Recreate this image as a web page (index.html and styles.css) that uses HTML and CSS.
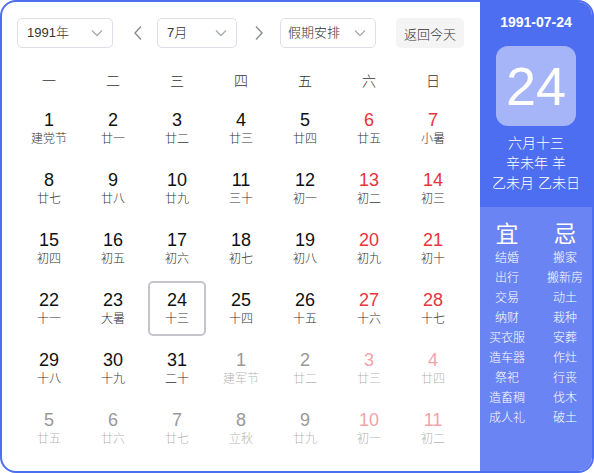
FILE: index.html
```html
<!DOCTYPE html>
<html lang="zh">
<head>
<meta charset="utf-8">
<link rel="stylesheet" href="styles.css">
</head>
<body>
<div class="cal">
  <div class="main">
    <div class="toolbar">
      <div class="select sel-year"><span>1991年</span><svg class="chev" viewBox="0 0 12 8" width="12" height="8"><path d="M1 1.5 L6 6.5 L11 1.5" fill="none" stroke="#a8abb2" stroke-width="1.3"/></svg></div>
      <div class="arrow arrow-prev"><svg viewBox="0 0 10 16" width="10" height="16"><path d="M8 1.5 L2 8 L8 14.5" fill="none" stroke="#8a8d93" stroke-width="1.4"/></svg></div>
      <div class="select sel-month"><span>7月</span><svg class="chev" viewBox="0 0 12 8" width="12" height="8"><path d="M1 1.5 L6 6.5 L11 1.5" fill="none" stroke="#a8abb2" stroke-width="1.3"/></svg></div>
      <div class="arrow arrow-next"><svg viewBox="0 0 10 16" width="10" height="16"><path d="M2 1.5 L8 8 L2 14.5" fill="none" stroke="#8a8d93" stroke-width="1.4"/></svg></div>
      <div class="select sel-hol"><span>假期安排</span><svg class="chev" viewBox="0 0 12 8" width="12" height="8"><path d="M1 1.5 L6 6.5 L11 1.5" fill="none" stroke="#a8abb2" stroke-width="1.3"/></svg></div>
      <div class="today-btn">返回今天</div>
    </div>
    <div class="weekdays">
      <div>一</div><div>二</div><div>三</div><div>四</div><div>五</div><div>六</div><div>日</div>
    </div>
    <div class="grid">
      <div class="cell"><b>1</b><i>建党节</i></div>
      <div class="cell"><b>2</b><i>廿一</i></div>
      <div class="cell"><b>3</b><i>廿二</i></div>
      <div class="cell"><b>4</b><i>廿三</i></div>
      <div class="cell"><b>5</b><i>廿四</i></div>
      <div class="cell we"><b>6</b><i>廿五</i></div>
      <div class="cell we"><b>7</b><i>小暑</i></div>

      <div class="cell"><b>8</b><i>廿七</i></div>
      <div class="cell"><b>9</b><i>廿八</i></div>
      <div class="cell"><b>10</b><i>廿九</i></div>
      <div class="cell"><b>11</b><i>三十</i></div>
      <div class="cell"><b>12</b><i>初一</i></div>
      <div class="cell we"><b>13</b><i>初二</i></div>
      <div class="cell we"><b>14</b><i>初三</i></div>

      <div class="cell"><b>15</b><i>初四</i></div>
      <div class="cell"><b>16</b><i>初五</i></div>
      <div class="cell"><b>17</b><i>初六</i></div>
      <div class="cell"><b>18</b><i>初七</i></div>
      <div class="cell"><b>19</b><i>初八</i></div>
      <div class="cell we"><b>20</b><i>初九</i></div>
      <div class="cell we"><b>21</b><i>初十</i></div>

      <div class="cell"><b>22</b><i>十一</i></div>
      <div class="cell"><b>23</b><i>大暑</i></div>
      <div class="cell sel"><b>24</b><i>十三</i></div>
      <div class="cell"><b>25</b><i>十四</i></div>
      <div class="cell"><b>26</b><i>十五</i></div>
      <div class="cell we"><b>27</b><i>十六</i></div>
      <div class="cell we"><b>28</b><i>十七</i></div>

      <div class="cell"><b>29</b><i>十八</i></div>
      <div class="cell"><b>30</b><i>十九</i></div>
      <div class="cell"><b>31</b><i>二十</i></div>
      <div class="cell other"><b>1</b><i>建军节</i></div>
      <div class="cell other"><b>2</b><i>廿二</i></div>
      <div class="cell other we"><b>3</b><i>廿三</i></div>
      <div class="cell other we"><b>4</b><i>廿四</i></div>

      <div class="cell other"><b>5</b><i>廿五</i></div>
      <div class="cell other"><b>6</b><i>廿六</i></div>
      <div class="cell other"><b>7</b><i>廿七</i></div>
      <div class="cell other"><b>8</b><i>立秋</i></div>
      <div class="cell other"><b>9</b><i>廿九</i></div>
      <div class="cell other we"><b>10</b><i>初一</i></div>
      <div class="cell other we"><b>11</b><i>初二</i></div>
    </div>
  </div>
  <div class="side">
    <div class="side-top">
      <div class="date">1991-07-24</div>
      <div class="bigday">24</div>
      <div class="lunar">
        <div>六月十三</div>
        <div>辛未年 羊</div>
        <div>乙未月 乙未日</div>
      </div>
    </div>
    <div class="side-bottom">
      <div class="col">
        <div class="head">宜</div>
        <div>结婚</div><div>出行</div><div>交易</div><div>纳财</div><div>买衣服</div><div>造车器</div><div>祭祀</div><div>造畜稠</div><div>成人礼</div>
      </div>
      <div class="col">
        <div class="head">忌</div>
        <div>搬家</div><div>搬新房</div><div>动土</div><div>栽种</div><div>安葬</div><div>作灶</div><div>行丧</div><div>伐木</div><div>破土</div>
      </div>
    </div>
  </div>
</div>
</body>
</html>
```

FILE: styles.css
```css
html, body {
  margin: 0;
  padding: 0;
  background: #fff;
}
body {
  font-family: "Liberation Sans", "Noto Sans CJK SC", sans-serif;
  font-weight: 300;
}
.cal {
  width: 594px;
  height: 473px;
  box-sizing: border-box;
  border: 2px solid #4e6ef2;
  border-radius: 16px;
  display: flex;
  overflow: hidden;
  background: #fff;
}
.main {
  width: 478px;
  box-sizing: border-box;
  padding: 16px 0 0 15px;
}
.toolbar {
  display: flex;
  align-items: center;
  height: 30px;
}
.select {
  box-sizing: border-box;
  height: 30px;
  border: 1px solid #dcdfe6;
  border-radius: 5px;
  display: flex;
  align-items: center;
  justify-content: space-between;
  padding: 0 9px;
  font-size: 13px;
  color: #333;
}
.select span { line-height: 28px; }
.sel-year { width: 96px; }
.sel-month { width: 80px; }
.sel-hol { width: 96px; padding-left: 7px; }
.arrow {
  display: flex;
  justify-content: center;
  align-items: center;
  height: 30px;
}
.arrow-prev { width: 38px; padding-left: 6px; }
.arrow-next { width: 43px; }
.today-btn {
  margin-left: 20px;
  width: 68px;
  height: 30px;
  box-sizing: border-box;
  background: #f4f4f5;
  border-radius: 5px;
  font-size: 13px;
  color: #333;
  display: flex;
  align-items: center;
  justify-content: center;
}
.weekdays {
  display: grid;
  grid-template-columns: repeat(7, 64px);
  margin-top: 14px;
  height: 36px;
  align-items: center;
  font-size: 14px;
  color: #333;
  text-align: center;
}
.grid {
  display: grid;
  grid-template-columns: repeat(7, 64px);
  grid-auto-rows: 55px;
  row-gap: 5px;
  margin-top: 3px;
}
.cell {
  margin: 0 3px;
  box-sizing: border-box;
  text-align: center;
  border: 2px solid transparent;
  border-radius: 5px;
  padding-top: 6px;
}
.cell b {
  display: block;
  font-weight: normal;
  font-size: 18px;
  line-height: 22px;
  color: #111;
}
.cell i {
  display: block;
  font-style: normal;
  font-size: 12px;
  line-height: 16px;
  color: #333;
}
.cell.we b { color: #e8333b; }
.cell.sel { border-color: #c4c6cc; }
.cell.other b { color: #999; }
.cell.other i { color: #b5b5b5; }
.cell.other.we b { color: #f2a3a8; }
.side {
  width: 112px;
  display: flex;
  flex-direction: column;
  color: #fff;
}
.side-top {
  background: #4e6ef2;
  height: 205px;
  display: flex;
  flex-direction: column;
  align-items: center;
}
.date {
  margin-top: 12px;
  font-size: 14px;
  line-height: 16px;
  font-weight: bold;
}
.bigday {
  margin-top: 16px;
  width: 80px;
  height: 80px;
  border-radius: 12px;
  background: #a6b5f8;
  font-size: 54px;
  font-weight: normal;
  line-height: 80px;
  text-align: center;
}
.lunar {
  margin-top: 7px;
  font-size: 14px;
  line-height: 20px;
  text-align: center;
}
.side-bottom {
  flex: 1;
  background: #6a84f4;
  display: flex;
  justify-content: center;
  padding-top: 14px;
  gap: 10px;
}
.col {
  width: 48px;
  text-align: center;
  font-size: 12px;
  line-height: 20px;
}
.col .head {
  font-size: 23px;
  font-weight: normal;
  line-height: 26px;
  margin-bottom: 1px;
}
```
